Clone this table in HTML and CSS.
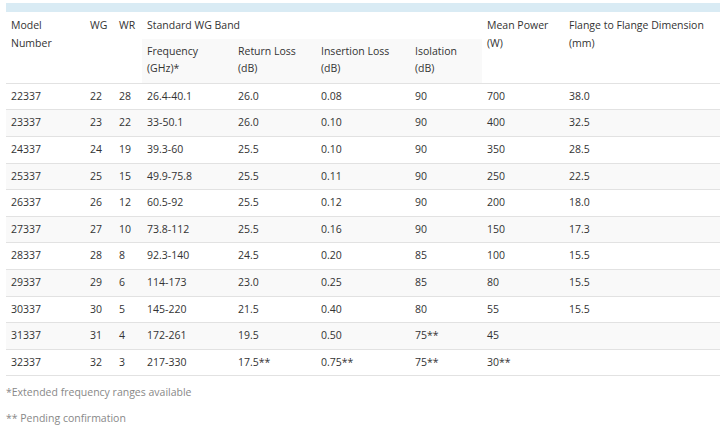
FILE: index.html
```html
<!DOCTYPE html>
<html>
<head>
<meta charset="utf-8">
<link rel="stylesheet" href="styles.css">
</head>
<body>
<div class="wrap">
<table class="spec">
<colgroup>
<col class="c-model"><col class="c-wg"><col class="c-wr"><col class="c-freq"><col class="c-rl"><col class="c-il"><col class="c-iso"><col class="c-mp"><col class="c-fl">
</colgroup>
<thead>
<tr class="h1">
<th rowspan="2">Model<br>Number</th>
<th rowspan="2">WG</th>
<th rowspan="2">WR</th>
<th colspan="4">Standard WG Band</th>
<th rowspan="2">Mean Power<br>(W)</th>
<th rowspan="2">Flange to Flange Dimension<br>(mm)</th>
</tr>
<tr class="h2">
<th class="sub">Frequency<br>(GHz)*</th>
<th class="sub">Return Loss<br>(dB)</th>
<th class="sub">Insertion Loss<br>(dB)</th>
<th class="sub">Isolation<br>(dB)</th>
</tr>
</thead>
<tbody>
<tr><td>22337</td><td>22</td><td>28</td><td>26.4-40.1</td><td>26.0</td><td>0.08</td><td>90</td><td>700</td><td>38.0</td></tr>
<tr><td>23337</td><td>23</td><td>22</td><td>33-50.1</td><td>26.0</td><td>0.10</td><td>90</td><td>400</td><td>32.5</td></tr>
<tr><td>24337</td><td>24</td><td>19</td><td>39.3-60</td><td>25.5</td><td>0.10</td><td>90</td><td>350</td><td>28.5</td></tr>
<tr><td>25337</td><td>25</td><td>15</td><td>49.9-75.8</td><td>25.5</td><td>0.11</td><td>90</td><td>250</td><td>22.5</td></tr>
<tr><td>26337</td><td>26</td><td>12</td><td>60.5-92</td><td>25.5</td><td>0.12</td><td>90</td><td>200</td><td>18.0</td></tr>
<tr><td>27337</td><td>27</td><td>10</td><td>73.8-112</td><td>25.5</td><td>0.16</td><td>90</td><td>150</td><td>17.3</td></tr>
<tr><td>28337</td><td>28</td><td>8</td><td>92.3-140</td><td>24.5</td><td>0.20</td><td>85</td><td>100</td><td>15.5</td></tr>
<tr><td>29337</td><td>29</td><td>6</td><td>114-173</td><td>23.0</td><td>0.25</td><td>85</td><td>80</td><td>15.5</td></tr>
<tr><td>30337</td><td>30</td><td>5</td><td>145-220</td><td>21.5</td><td>0.40</td><td>80</td><td>55</td><td>15.5</td></tr>
<tr><td>31337</td><td>31</td><td>4</td><td>172-261</td><td>19.5</td><td>0.50</td><td>75**</td><td>45</td><td></td></tr>
<tr><td>32337</td><td>32</td><td>3</td><td>217-330</td><td>17.5**</td><td>0.75**</td><td>75**</td><td>30**</td><td></td></tr>
</tbody>
</table>
<p class="note first">*Extended frequency ranges available</p>
<p class="note">** Pending confirmation</p>
</div>
</body>
</html>
```
FILE: styles.css
```css
html, body {
  margin: 0;
  padding: 0;
  background: #ffffff;
}
.wrap {
  padding: 3px 6px 0 6px;
  font-family: "Open Sans", "Liberation Sans", sans-serif;
  font-size: 10.5px;
  line-height: 17.6px;
  color: #333333;
}
.spec {
  width: 714px;
  border-collapse: collapse;
  table-layout: fixed;
  border-top: 9px solid #d9ebf4;
}
.c-model { width: 79px; }
.c-wg { width: 29px; }
.c-wr { width: 28px; }
.c-freq { width: 91px; }
.c-rl { width: 83px; }
.c-il { width: 94px; }
.c-iso { width: 72px; }
.c-mp { width: 82px; }
.c-fl { width: 156px; }
.spec th,
.spec td {
  padding: 4px 5px;
  text-align: left;
  vertical-align: top;
  font-weight: normal;
  white-space: nowrap;
}
.spec .h1 th {
  padding-top: 5px;
}
.spec th.sub {
  padding-bottom: 5px;
  background: #f9f9f9;
}
.spec th {
  border-bottom: 1px solid #e2e2e2;
}
.spec .h1 th[colspan] {
  border-bottom: none;
}
.spec td {
  border-bottom: 1px solid #e2e2e2;
}
.spec tbody tr:nth-child(even) td {
  background: #f9f9f9;
}
.note {
  margin: 0 0 8px 0;
  color: #888888;
}
.note.first {
  margin-top: 8px;
}
```
